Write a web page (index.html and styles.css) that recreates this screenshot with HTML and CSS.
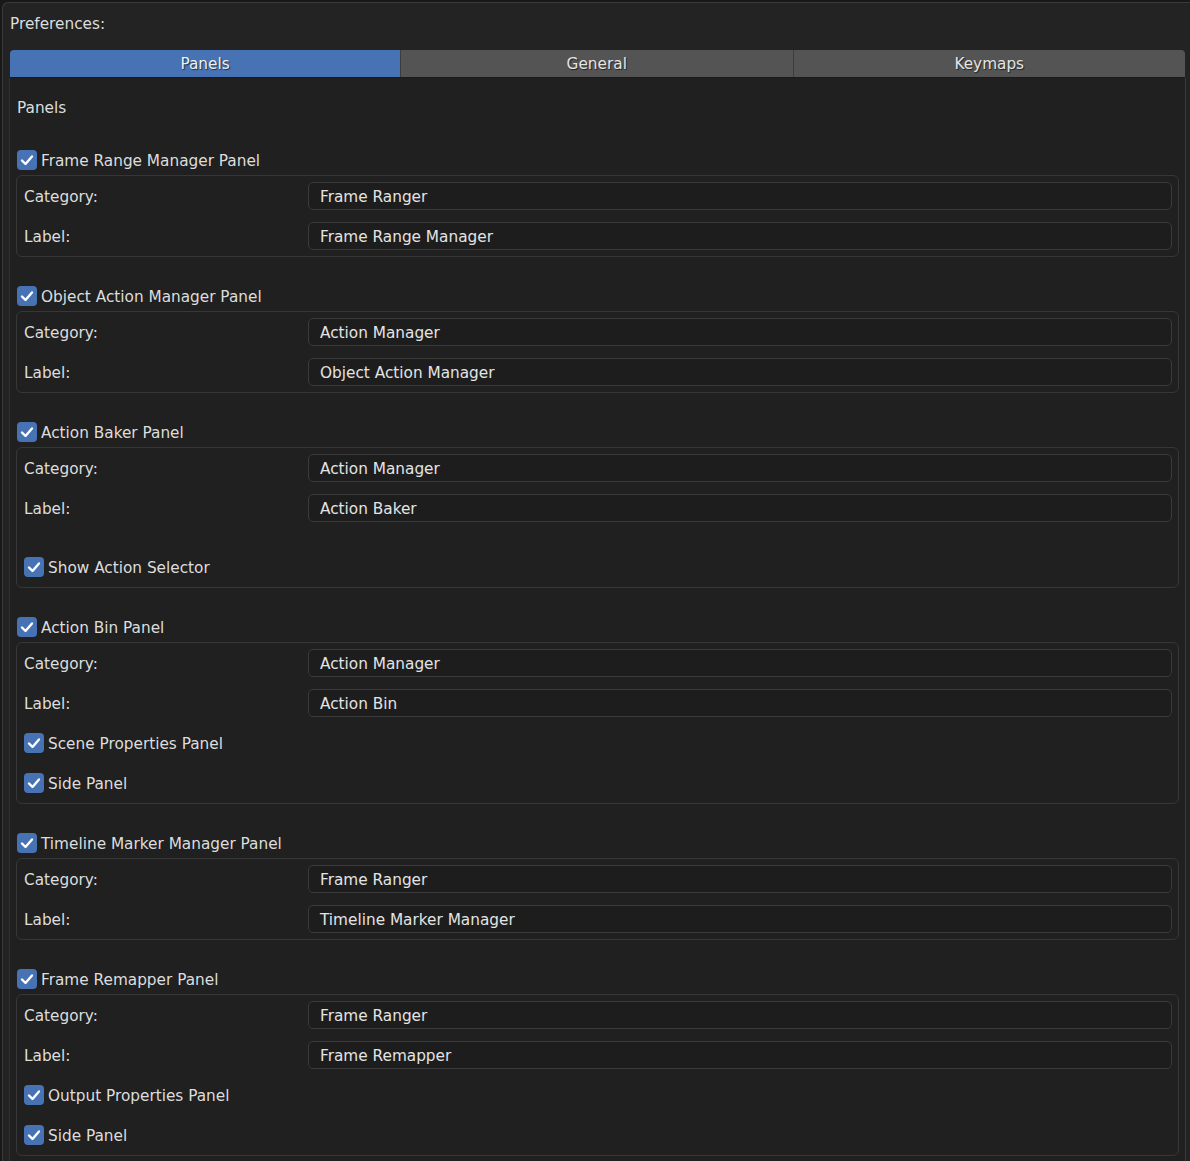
FILE: index.html
```html
<!DOCTYPE html>
<html>
<head>
<meta charset="utf-8">
<link rel="stylesheet" href="styles.css">
</head>
<body>
<div class="window">
  <div class="title">Preferences:</div>
  <div class="tabs">
    <div class="tab active">Panels</div>
    <div class="tab">General</div>
    <div class="tab">Keymaps</div>
  </div>
  <div class="pane">
    <div class="pane-title">Panels</div>

    <section class="section">
      <div class="header"><span class="cb"><svg viewBox="0 0 20 20"><path d="M5 10.5 L8.5 14 L15 6.5"/></svg></span><span class="t">Frame Range Manager Panel</span></div>
      <div class="box">
        <div class="row"><span class="label">Category:</span><span class="field">Frame Ranger</span></div>
        <div class="row"><span class="label">Label:</span><span class="field">Frame Range Manager</span></div>
      </div>
    </section>

    <section class="section">
      <div class="header"><span class="cb"><svg viewBox="0 0 20 20"><path d="M5 10.5 L8.5 14 L15 6.5"/></svg></span><span class="t">Object Action Manager Panel</span></div>
      <div class="box">
        <div class="row"><span class="label">Category:</span><span class="field">Action Manager</span></div>
        <div class="row"><span class="label">Label:</span><span class="field">Object Action Manager</span></div>
      </div>
    </section>

    <section class="section">
      <div class="header"><span class="cb"><svg viewBox="0 0 20 20"><path d="M5 10.5 L8.5 14 L15 6.5"/></svg></span><span class="t">Action Baker Panel</span></div>
      <div class="box">
        <div class="row"><span class="label">Category:</span><span class="field">Action Manager</span></div>
        <div class="row"><span class="label">Label:</span><span class="field">Action Baker</span></div>
        <div class="spacer"></div>
        <div class="row check"><span class="cb"><svg viewBox="0 0 20 20"><path d="M5 10.5 L8.5 14 L15 6.5"/></svg></span><span class="t">Show Action Selector</span></div>
      </div>
    </section>

    <section class="section">
      <div class="header"><span class="cb"><svg viewBox="0 0 20 20"><path d="M5 10.5 L8.5 14 L15 6.5"/></svg></span><span class="t">Action Bin Panel</span></div>
      <div class="box">
        <div class="row"><span class="label">Category:</span><span class="field">Action Manager</span></div>
        <div class="row"><span class="label">Label:</span><span class="field">Action Bin</span></div>
        <div class="row check"><span class="cb"><svg viewBox="0 0 20 20"><path d="M5 10.5 L8.5 14 L15 6.5"/></svg></span><span class="t">Scene Properties Panel</span></div>
        <div class="row check"><span class="cb"><svg viewBox="0 0 20 20"><path d="M5 10.5 L8.5 14 L15 6.5"/></svg></span><span class="t">Side Panel</span></div>
      </div>
    </section>

    <section class="section">
      <div class="header"><span class="cb"><svg viewBox="0 0 20 20"><path d="M5 10.5 L8.5 14 L15 6.5"/></svg></span><span class="t">Timeline Marker Manager Panel</span></div>
      <div class="box">
        <div class="row"><span class="label">Category:</span><span class="field">Frame Ranger</span></div>
        <div class="row"><span class="label">Label:</span><span class="field">Timeline Marker Manager</span></div>
      </div>
    </section>

    <section class="section">
      <div class="header"><span class="cb"><svg viewBox="0 0 20 20"><path d="M5 10.5 L8.5 14 L15 6.5"/></svg></span><span class="t">Frame Remapper Panel</span></div>
      <div class="box">
        <div class="row"><span class="label">Category:</span><span class="field">Frame Ranger</span></div>
        <div class="row"><span class="label">Label:</span><span class="field">Frame Remapper</span></div>
        <div class="row check"><span class="cb"><svg viewBox="0 0 20 20"><path d="M5 10.5 L8.5 14 L15 6.5"/></svg></span><span class="t">Output Properties Panel</span></div>
        <div class="row check"><span class="cb"><svg viewBox="0 0 20 20"><path d="M5 10.5 L8.5 14 L15 6.5"/></svg></span><span class="t">Side Panel</span></div>
      </div>
    </section>
  </div>
</div>
</body>
</html>
```

FILE: styles.css
```css
* { box-sizing: border-box; }
html, body {
  margin: 0;
  padding: 0;
  background: #181818;
  overflow: hidden;
  height: 1161px;
}
body {
  font-family: "DejaVu Sans", sans-serif;
  font-size: 15.3px;
  color: #dddddd;
}
.window {
  margin: 2px 0 0 2px;
  width: 1200px;
  height: 1200px;
  background: #232323;
  border-top: 1px solid #3b3b3b;
  border-left: 1px solid #3b3b3b;
  border-top-left-radius: 6px;
  padding-left: 6px;
}
.title {
  height: 40px;
  line-height: 38px;
  padding-top: 2px;
  padding-left: 1px;
  margin-bottom: 7px;
}
.tabs {
  display: flex;
  width: 1175px;
  height: 27px;
  margin-left: 1px;
  border-radius: 4px 4px 0 0;
  overflow: hidden;
}
.tab {
  flex: 1;
  background: #545454;
  text-align: center;
  line-height: 25px;
  padding-top: 2px;
  color: #e4e4e4;
  text-shadow: 1px 1px 1px rgba(0,0,0,0.6);
  border-left: 1px solid #3d3d3d;
}
.tab:first-child { border-left: none; flex: 0 0 390px; }
.tab.active { background: #4772b3; color: #f0f0f0; }
.pane {
  width: 1177px;
  height: 1200px;
  background: #202020;
  border-left: 1px solid #303030;
  border-right: 1px solid #383838;
  border-top: 1px solid #1a1a1a;
  padding: 9px 6px 0 6px;
}
.pane-title {
  height: 40px;
  line-height: 38px;
  padding-top: 2px;
  padding-left: 1px;
  margin-bottom: 18px;
}
.section { margin-bottom: 24px; }
.header {
  height: 30px;
  display: flex;
  align-items: center;
  padding-left: 1px;
}
.t { padding-top: 2px; }
.cb {
  width: 20px;
  height: 20px;
  border-radius: 4px;
  background: #4772b3;
  display: inline-flex;
  align-items: center;
  justify-content: center;
  margin-right: 4px;
  flex: none;
}
.cb svg { width: 20px; height: 20px; }
.cb path {
  fill: none;
  stroke: #ffffff;
  stroke-width: 2.4;
  stroke-linecap: round;
  stroke-linejoin: round;
}
.box {
  border: 1px solid #373737;
  border-radius: 6px;
  padding: 0 6px 0 7px;
}
.row {
  height: 40px;
  display: flex;
  align-items: center;
}
.label { width: 284px; flex: none; padding-top: 2px; }
.field {
  flex: 1;
  height: 28px;
  line-height: 24px;
  padding-top: 2px;
  background: #1d1d1d;
  border: 1px solid #3a3a3a;
  border-radius: 5px;
  padding-left: 11px;
  color: #e4e4e4;
}
.spacer { height: 19px; }
```
